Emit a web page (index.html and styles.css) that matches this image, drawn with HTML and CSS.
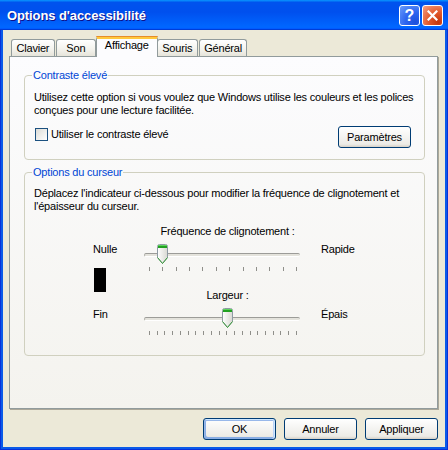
FILE: index.html
```html
<!DOCTYPE html>
<html lang="fr">
<head>
    <meta charset="UTF-8">
    <title>Options d'accessibilité</title>
    <link rel="stylesheet" href="styles.css">
</head>
<body>
    <div class="window">
        <div class="titlebar">
            <span class="title">Options d'accessibilité</span>
            <div class="title-buttons">
                <button class="tb-btn help">?</button>
                <button class="tb-btn close">
                    <svg width="11" height="11" viewBox="0 0 11 11">
                        <path d="M1.5 1.5 L9.5 9.5 M9.5 1.5 L1.5 9.5" stroke="#fff" stroke-width="2.2" stroke-linecap="square"/>
                    </svg>
                </button>
            </div>
        </div>

        <div class="dialog">
            <ul class="tabs">
                <li>Clavier</li>
                <li class="son">Son</li>
                <li class="active">Affichage</li>
                <li>Souris</li>
                <li>Général</li>
            </ul>

            <div class="panel">
                <!-- Contraste -->
                <fieldset class="group contrast">
                    <legend>Contraste élevé</legend>
                    <p class="hint">Utilisez cette option si vous voulez que Windows utilise les couleurs et les polices<br>conçues pour une lecture facilitée.</p>
                    <div class="row">
                        <label class="check"><span class="box"></span>Utiliser le contraste élevé</label>
                        <button class="btn settings">Paramètres</button>
                    </div>
                </fieldset>

                <!-- Curseur -->
                <fieldset class="group cursor">
                    <legend>Options du curseur</legend>
                    <p class="hint">Déplacez l'indicateur ci-dessous pour modifier la fréquence de clignotement et<br>l'épaisseur du curseur.</p>
                    <div class="cursor-grid">
                        <div class="caption cap-rate">Fréquence de clignotement :</div>
                        <div class="end-label left-1">Nulle</div>
                        <div class="slider slider-rate">
                            <div class="track"></div>
                            <div class="ticks">
                                <span></span><span></span><span></span><span></span><span></span><span></span>
                                <span></span><span></span><span></span><span></span><span></span><span></span>
                            </div>
                            <svg class="thumb" width="11" height="21" viewBox="0 0 11 21" style="left: 13px">
                                <defs>
                                    <linearGradient id="thumbFill1" x1="0" x2="1" y1="0" y2="0">
                                        <stop offset="0" stop-color="#ffffff"/>
                                        <stop offset="1" stop-color="#d8d8d2"/>
                                    </linearGradient>
                                </defs>
                                <path d="M0.5 2.5 Q0.5 0.5 2.5 0.5 H8.5 Q10.5 0.5 10.5 2.5 V13.5 L5.5 19.5 L0.5 13.5 Z" fill="url(#thumbFill1)" stroke="#8e9aa3"/>
                                <rect x="1" y="1" width="9" height="1" fill="#5fd35f"/>
                                <rect x="1" y="2" width="9" height="2" fill="#21a121"/>
                                <path d="M0.5 13.5 L5.5 19.5 L10.5 13.5" fill="none" stroke="#3a9c3a"/>
                            </svg>
                        </div>
                        <div class="end-label right-1">Rapide</div>

                        <div class="cursor-preview"></div>

                        <div class="caption cap-width">Largeur :</div>
                        <div class="end-label left-2">Fin</div>
                        <div class="slider slider-width">
                            <div class="track"></div>
                            <div class="ticks">
                                <span></span><span></span><span></span><span></span><span></span>
                                <span></span><span></span><span></span><span></span><span></span>
                                <span></span><span></span><span></span><span></span><span></span>
                                <span></span><span></span><span></span><span></span><span></span>
                            </div>
                            <svg class="thumb" width="11" height="21" viewBox="0 0 11 21" style="left: 78px">
                                <defs>
                                    <linearGradient id="thumbFill2" x1="0" x2="1" y1="0" y2="0">
                                        <stop offset="0" stop-color="#ffffff"/>
                                        <stop offset="1" stop-color="#d8d8d2"/>
                                    </linearGradient>
                                </defs>
                                <path d="M0.5 2.5 Q0.5 0.5 2.5 0.5 H8.5 Q10.5 0.5 10.5 2.5 V13.5 L5.5 19.5 L0.5 13.5 Z" fill="url(#thumbFill2)" stroke="#8e9aa3"/>
                                <rect x="1" y="1" width="9" height="1" fill="#5fd35f"/>
                                <rect x="1" y="2" width="9" height="2" fill="#21a121"/>
                                <path d="M0.5 13.5 L5.5 19.5 L10.5 13.5" fill="none" stroke="#3a9c3a"/>
                            </svg>
                        </div>
                        <div class="end-label right-2">Épais</div>
                    </div>
                </fieldset>
            </div>

            <div class="actions">
                <button class="btn default">OK</button>
                <button class="btn">Annuler</button>
                <button class="btn">Appliquer</button>
            </div>
        </div>
    </div>
</body>
</html>
```

FILE: styles.css
```css
* {
    margin: 0;
    padding: 0;
    box-sizing: border-box;
}

body {
    background: #fff;
    font-family: "Liberation Sans", Arial, sans-serif;
    font-size: 11px;
    line-height: 13px;
    letter-spacing: -0.2px;
    color: #000;
}

.window {
    width: 448px;
    height: 450px;
    display: flex;
    flex-direction: column;
    background: #0a5ae8;
    box-shadow: inset 1px 0 #0831d9, inset -1px 0 #0831d9, inset 0 -1px #0831d9;
}

/* title bar */

.titlebar {
    height: 30px;
    display: flex;
    align-items: center;
    justify-content: space-between;
    padding: 0 5px 0 7px;
    background: linear-gradient(180deg, #0997ff, #0053ee 8%, #0050ee 40%, #0066ff 88%, #0066ff 93%, #005bff 95%, #003dd7 96%, #003dd7);
}

.title {
    color: #fff;
    font-weight: bold;
    font-size: 13px;
    letter-spacing: -0.1px;
    text-shadow: 1px 1px #0f1089;
    margin-top: 1px;
}

.title-buttons {
    display: flex;
    gap: 2px;
    margin-top: 1px;
}

.tb-btn {
    width: 21px;
    height: 21px;
    border: 1px solid #fff;
    border-radius: 3px;
    display: flex;
    align-items: center;
    justify-content: center;
    color: #fff;
    font-family: "Liberation Sans", Arial, sans-serif;
    font-weight: bold;
    font-size: 16px;
}

.help {
    background: radial-gradient(circle at 80% 85%, #1c4fdc 0%, #2e66f0 45%, #6a9cfa 100%);
}

.close {
    background: radial-gradient(circle at 80% 85%, #c4360c 0%, #e35a2c 45%, #f5a086 100%);
}

/* dialog body */

.dialog {
    flex: 1;
    display: flex;
    flex-direction: column;
    margin: 0 3px 3px;
    padding: 6px 7px 7px 6px;
    background: #ece9d8;
}

.tabs {
    list-style: none;
    display: flex;
    align-items: flex-end;
    height: 20px;
    padding-left: 2px;
    position: relative;
    z-index: 1;
}

.tabs li {
    min-width: 40px;
    height: 17px;
    padding: 2px 4.5px 0;
    margin-right: 1px;
    text-align: center;
    border: 1px solid #919b9c;
    border-bottom: none;
    border-radius: 3px 3px 0 0;
    background: linear-gradient(180deg, #fff, #f3f2ec 60%, #e6e4da);
}

.tabs li.son {
    margin-right: 2px;
}

.tabs li.active {
    height: 21px;
    margin: 0 -1px -1px -2px;
    padding-top: 0;
    padding-left: 8px;
    padding-right: 8px;
    border-top: 3px solid #ffc83c;
    background: #fcfcfe;
    position: relative;
}

.tabs li.active::before {
    content: "";
    position: absolute;
    left: -1px;
    right: -1px;
    top: -3px;
    height: 1px;
    background: #e68b2c;
    border-radius: 3px 3px 0 0;
}

.panel {
    flex: 1;
    padding: 0 12px 0 14px;
    border: 1px solid #919b9c;
    background: linear-gradient(180deg, #fcfcfe, #f4f3ee);
    box-shadow: 1px 1px 0 #aca899;
}

/* group boxes */

.group {
    border: 1px solid #d0d0bf;
    border-radius: 4px;
    padding: 0 9px 11px;
    min-width: 0;
}

.group legend {
    color: #0046d5;
    padding: 0 1px;
    margin-left: -2px;
    line-height: 13px;
}

.contrast {
    margin-top: 12px;
}

.cursor {
    margin-top: 6px;
    padding-bottom: 17px;
}

.hint {
    margin-top: 9px;
    white-space: nowrap;
}

.cursor .hint {
    margin-top: 8px;
}

.row {
    display: flex;
    justify-content: space-between;
    align-items: flex-start;
    margin-top: 9px;
    padding-right: 4px;
}

.check {
    display: flex;
    align-items: center;
    gap: 3px;
    margin-top: 2px;
}

.box {
    width: 13px;
    height: 13px;
    border: 1px solid #1c5180;
    background: linear-gradient(135deg, #dcdcd7, #fff);
    margin-left: 1px;
}

/* buttons */

.btn {
    width: 73px;
    height: 22px;
    font-family: "Liberation Sans", Arial, sans-serif;
    font-size: 11px;
    letter-spacing: -0.2px;
    color: #000;
    border: 1px solid #003c74;
    border-radius: 3px;
    background: linear-gradient(180deg, #fff, #ecebe6 86%, #d6d0c5);
}

.btn.default {
    box-shadow: inset -1px 1px #cee7ff, inset 1px 2px #98b8ea, inset -2px 0 #bcd4f6, inset 1px -1px #89ade4, inset 2px -2px #89ade4;
}

.actions {
    display: flex;
    justify-content: flex-end;
    gap: 8px;
    margin-top: 9px;
}

/* cursor sliders */

.cursor-grid {
    display: grid;
    grid-template-columns: 51px 156px auto;
    grid-template-rows: 18px 25px 21px 19px 30px;
    margin: 12px 0 0 59px;
}

.caption {
    grid-column: 2;
    text-align: center;
    padding-left: 11px;
    white-space: nowrap;
}

.cap-rate { grid-row: 1; }
.cap-width { grid-row: 4; }

.left-1 { grid-row: 2; grid-column: 1; }
.right-1 { grid-row: 2; grid-column: 3; padding-left: 21px; }
.left-2 { grid-row: 5; grid-column: 1; }
.right-2 { grid-row: 5; grid-column: 3; padding-left: 21px; }

.slider-rate { grid-row: 2 / 4; grid-column: 2; }
.slider-width { grid-row: 5; grid-column: 2; margin-top: -1px; }

.cursor-preview {
    grid-row: 3 / 5;
    grid-column: 1;
    width: 12px;
    height: 24px;
    margin-left: 1px;
    background: #000;
}

.slider {
    position: relative;
    height: 30px;
}

.track {
    height: 4px;
    margin-top: 10px;
    border-top: 1px solid #9c9c98;
    border-bottom: 1px solid #fff;
    border-left: 1px solid #b0b0aa;
    border-radius: 2px;
    background: #e4e3dc;
}

.ticks {
    display: flex;
    justify-content: space-between;
    margin: 10px 3px 0 5px;
}

.ticks span {
    width: 1px;
    height: 4px;
    background: #8f8f8a;
}

.thumb {
    position: absolute;
    top: 1px;
}
```
